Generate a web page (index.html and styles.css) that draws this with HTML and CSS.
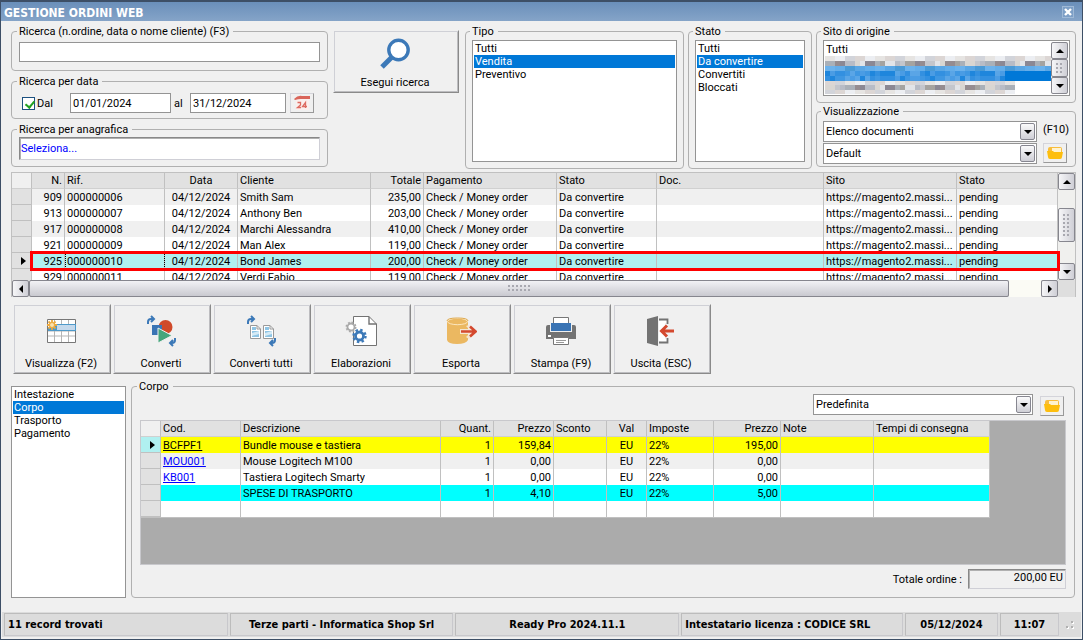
FILE: index.html
```html
<!DOCTYPE html>
<html lang="it">
<head>
<meta charset="utf-8">
<title>Gestione ordini web</title>
<link rel="stylesheet" href="styles.css">
</head>
<body>
<div class="window">
  <header class="titlebar">
    <h1 class="title">GESTIONE ORDINI WEB</h1>
    <button class="close" aria-label="Chiudi"><svg width="8" height="8" viewBox="0 0 8 8"><path d="M1 1L7 7M7 1L1 7" stroke="#fff" stroke-width="2.4"/></svg></button>
  </header>

  <main class="content">
    <section class="filters">
      <div class="stack">
        <fieldset class="group">
          <legend>Ricerca (n.ordine, data o nome cliente) (F3)</legend>
          <input class="field" type="text" aria-label="Ricerca (n.ordine, data o nome cliente)">
        </fieldset>
        <fieldset class="group">
          <legend>Ricerca per data</legend>
          <div class="dates">
            <label class="check"><input type="checkbox" checked>Dal</label>
            <input class="field date-from" type="text" value="01/01/2024" aria-label="Dal">
            <label for="to">al</label>
            <input class="field date-to" id="to" type="text" value="31/12/2024">
            <button class="mini" aria-label="Calendario"><svg width="16" height="16" viewBox="0 0 16 16"><path d="M1 4Q4 1 7 1H15V15H2V4Z" fill="#fbeeec"/><path d="M0 4Q4 0 8 1H16V4H7Q4 4 1 5Z" fill="#d9655a"/><path d="M3.500 7.500H6.500V10L3.500 12.500H7M11.500 13V7.500L8.500 11.500H13" fill="none" stroke="#dd6a60" stroke-width="1.300"/></svg></button>
          </div>
        </fieldset>
        <fieldset class="group">
          <legend>Ricerca per anagrafica</legend>
          <input class="field sunken" type="text" value="Seleziona..." aria-label="Ricerca per anagrafica">
        </fieldset>
      </div>

      <button class="tool search">
        <svg width="32" height="32" viewBox="0 0 32 32"><path d="M3 29L13 19" stroke="#3c79b8" stroke-width="5"/><circle cx="19.500" cy="12" r="9.700" fill="#fff" stroke="#3c79b8" stroke-width="3.400"/></svg>
        <span>Esegui ricerca</span>
      </button>

      <fieldset class="group tall">
        <legend>Tipo</legend>
        <select class="listbox" size="4" aria-label="Tipo"><option>Tutti</option><option selected>Vendita</option><option>Preventivo</option></select>
      </fieldset>

      <fieldset class="group tall">
        <legend>Stato</legend>
        <select class="listbox" size="4" aria-label="Stato"><option>Tutti</option><option selected>Da convertire</option><option>Convertiti</option><option>Bloccati</option></select>
      </fieldset>

      <div class="stack">
        <fieldset class="group sites">
          <legend>Sito di origine</legend>
          <div class="sitebox">
            <div class="sitelist"><div class="siteitem">Tutti</div><svg id="mosaic" width="226" height="39" viewBox="0 0 226 39" shape-rendering="crispEdges" aria-hidden="true"></svg></div>
            <div class="vbar">
              <button class="sb" aria-label="Su"><i class="up"></i></button>
              <div class="thumb"><i class="dots"></i></div>
              <button class="sb" aria-label="Giù"><i class="down"></i></button>
            </div>
          </div>
        </fieldset>
        <fieldset class="group views">
          <legend>Visualizzazione</legend>
          <div class="viewgrid">
            <div class="combo"><select id="view"><option>Elenco documenti</option></select><span class="drop"><i class="down"></i></span></div>
            <label for="view">(F10)</label>
            <div class="combo"><select aria-label="Layout"><option>Default</option></select><span class="drop"><i class="down"></i></span></div>
            <button class="mini" aria-label="Apri layout"><svg width="16" height="16" viewBox="0 0 16 16"><path d="M1 4Q1 2 3 2H13Q15 2 15 4V8H1Z" fill="#f8bd3c"/><path d="M5 3H14V7H5Z" fill="#fff3cf"/><path d="M0 6H6L7 7H16L15 12Q15 14 13 14H3Q1 14 1 12Z" fill="#fdbe0e"/></svg></button>
          </div>
        </fieldset>
      </div>
    </section>

    <section class="orders">
      <div class="orders-view">
        <table class="grid">
          <colgroup><col class="w20"><col class="w33"><col class="w100"><col class="w73"><col class="w133"><col class="w53"><col class="w133"><col class="w100"><col><col class="w133"><col class="w101"></colgroup>
          <thead><tr><th class="corner"></th><th class="r">N.</th><th>Rif.</th><th class="c">Data</th><th>Cliente</th><th class="r">Totale</th><th>Pagamento</th><th>Stato</th><th>Doc.</th><th>Sito</th><th>Stato</th></tr></thead>
          <tbody>
            <tr class="alt"><th></th><td class="r">909</td><td>000000006</td><td class="c">04/12/2024</td><td>Smith Sam</td><td class="r">235,00</td><td>Check / Money order</td><td>Da convertire</td><td></td><td>https://magento2.massi...</td><td>pending</td></tr>
            <tr><th></th><td class="r">913</td><td>000000007</td><td class="c">04/12/2024</td><td>Anthony Ben</td><td class="r">203,00</td><td>Check / Money order</td><td>Da convertire</td><td></td><td>https://magento2.massi...</td><td>pending</td></tr>
            <tr class="alt"><th></th><td class="r">917</td><td>000000008</td><td class="c">04/12/2024</td><td>Marchi Alessandra</td><td class="r">410,00</td><td>Check / Money order</td><td>Da convertire</td><td></td><td>https://magento2.massi...</td><td>pending</td></tr>
            <tr><th></th><td class="r">921</td><td>000000009</td><td class="c">04/12/2024</td><td>Man Alex</td><td class="r">119,00</td><td>Check / Money order</td><td>Da convertire</td><td></td><td>https://magento2.massi...</td><td>pending</td></tr>
            <tr class="current"><th><i class="marker"></i></th><td class="r">925</td><td class="focus">000000010</td><td class="c">04/12/2024</td><td>Bond James</td><td class="r">200,00</td><td>Check / Money order</td><td>Da convertire</td><td></td><td>https://magento2.massi...</td><td>pending</td></tr>
            <tr><th></th><td class="r">929</td><td>000000011</td><td class="c">04/12/2024</td><td>Verdi Fabio</td><td class="r">119,00</td><td>Check / Money order</td><td>Da convertire</td><td></td><td>https://magento2.massi...</td><td>pending</td></tr>
          </tbody>
        </table>
      </div>
      <div class="vbar">
        <button class="sb" aria-label="Su"><i class="up"></i></button>
        <div class="track"><div class="thumb"><i class="dots"></i></div></div>
        <button class="sb" aria-label="Giù"><i class="down"></i></button>
      </div>
      <div class="hbar">
        <button class="sb" aria-label="Sinistra"><i class="left"></i></button>
        <div class="hthumb"><i class="dots wide"></i></div>
        <div class="htrack"></div>
        <button class="sb" aria-label="Destra"><i class="right"></i></button>
      </div>
      <div class="highlight"></div>
    </section>

    <nav class="toolbar">
      <button class="tool">
        <svg width="32" height="32" viewBox="0 0 32 32"><path d="M2 4H31V27H2Z" fill="#fff"/><path d="M9.500 4V27M16.500 4V27M23.500 4V27M2 21H31M2 16H31M2 10H31" stroke="#b5b5b5"/><path d="M2.500 4.500H30.500V27.500H2.500Z" fill="none" stroke="#777"/><path d="M9 9H31V16H3V13Z" fill="#4f9aca"/><path d="M12 10H30V15H12Z" fill="#c5d9ec"/><g stroke="#eda93c" stroke-width="1.800"><path d="M7 5V15M2 10H12M3.500 6.500L10.500 13.500M10.500 6.500L3.500 13.500"/></g><circle cx="7" cy="10" r="2.500" fill="#fbe2ae" stroke="#eda93c"/></svg>
        <span>Visualizza (F2)</span>
      </button>
      <button class="tool">
        <svg width="32" height="32" viewBox="0 0 32 32"><circle cx="20.500" cy="12" r="7" fill="#d04a2a"/><path d="M7 10H17V20H7Z" fill="#3a74b4"/><path d="M13 13L27 20.500L13 28Z" fill="#45a67c" stroke="#f0f0f0"/><g fill="none" stroke="#3c79b8" stroke-width="2"><path d="M3 9V7Q3 4 6 4H8M6 1L9 4L6 7M30 23V25Q30 28 27 28H25M28 25L25 28L28 31"/></g></svg>
        <span>Converti</span>
      </button>
      <button class="tool">
        <svg width="32" height="32" viewBox="0 0 32 32"><g fill="#fff" stroke="#999"><path d="M5.500 10.500H12L15.500 14V23.500H5.500ZM18.500 10.500H25L28.500 14V23.500H18.500Z"/><path d="M12 10.500V14H15.500M25 10.500V14H28.500" fill="none"/></g><g fill="#8ec4e4"><path d="M7 12H11V15H7ZM7 16H14V22H7ZM20 12H24V15H20ZM20 16H27V22H20Z"/></g><path d="M7 18L14 16V19L7 21ZM20 18L27 16V19L20 21Z" fill="#d5eaf5"/><g fill="none" stroke="#3c79b8" stroke-width="2"><path d="M3 9V7Q3 4 6 4H8M6 1L9 4L6 7M30 23V25Q30 28 27 28H25M28 25L25 28L28 31"/></g></svg>
        <span>Converti tutti</span>
      </button>
      <button class="tool">
        <svg width="32" height="32" viewBox="0 0 32 32"><path d="M8.500 1.500H24L31.500 9V30.500H8.500Z" fill="#fff" stroke="#737373"/><path d="M24 1.500V9H31.500" fill="none" stroke="#737373" stroke-width="1.400"/><circle cx="6" cy="12" r="3.500" fill="#fff" stroke="#aaa" stroke-width="1.800"/><circle cx="6" cy="12" r="4.700" fill="none" stroke="#aaa" stroke-width="1.600" stroke-dasharray="1.900 1.790"/><circle cx="14.500" cy="21" r="4" fill="#fff" stroke="#3c79b8" stroke-width="2.800"/><circle cx="14.500" cy="21" r="6" fill="none" stroke="#3c79b8" stroke-width="2.400" stroke-dasharray="2.400 2.310"/></svg>
        <span>Elaborazioni</span>
      </button>
      <button class="tool">
        <svg width="32" height="32" viewBox="0 0 32 32"><path d="M2 6V25Q3 29 12 29Q21 29 23 25V6Z" fill="#ebb861"/><ellipse cx="12.500" cy="6.500" rx="10" ry="3.200" fill="#ebb861" stroke="#fff1d5" stroke-width=".8"/><path d="M2 6Q2 3 12.500 3Q23 3 23 6" fill="none" stroke="#dfa94c"/><path d="M15 14H24L21 11L24 10L32 17L24 24L21 22L24 19H15Z" fill="#f4e6d4"/><path d="M16 16.500H30M25 11.500L30.500 16.500L25 21.500" fill="none" stroke="#d4492f" stroke-width="2.600"/></svg>
        <span>Esporta</span>
      </button>
      <button class="tool">
        <svg width="32" height="32" viewBox="0 0 32 32"><path d="M1 12Q1 10 3 10H5V17H27V10H29Q31 10 31 12V24H1Z" fill="#737373"/><path d="M8.500 2.500H23.500V10H8.500Z" fill="#fff" stroke="#777"/><path d="M6 8H26V16H6Z" fill="#3a74b4"/><path d="M8.500 22.500H23.500V29.500H8.500Z" fill="#fff" stroke="#777"/><path d="M11 25.500H21M11 27.500H19" stroke="#999"/><path d="M3 20H6V22H3Z" fill="#fff"/></svg>
        <span>Stampa (F9)</span>
      </button>
      <button class="tool">
        <svg width="32" height="32" viewBox="0 0 32 32"><path d="M2 4L13 1V31L2 28Z" fill="#737373"/><path d="M14 4.500H22.500V9M22.500 23V27.500H14" fill="#fff" stroke="#737373" stroke-width="1.800"/><path d="M14 6H20V26H14Z" fill="#fff"/><path d="M17 16H29M22 10.500L16.500 16L22 21.500" fill="none" stroke="#d4492f" stroke-width="3"/></svg>
        <span>Uscita (ESC)</span>
      </button>
    </nav>

    <section class="detail">
      <select class="listbox sections" size="4" aria-label="Sezioni"><option>Intestazione</option><option selected>Corpo</option><option>Trasporto</option><option>Pagamento</option></select>
      <fieldset class="group body">
        <legend>Corpo</legend>
        <div class="body-inner">
          <div class="layoutbar">
            <div class="combo preset"><select aria-label="Layout corpo"><option>Predefinita</option></select><span class="drop"><i class="down"></i></span></div>
            <button class="mini" aria-label="Apri layout corpo"><svg width="16" height="16" viewBox="0 0 16 16"><path d="M1 4Q1 2 3 2H13Q15 2 15 4V8H1Z" fill="#f8bd3c"/><path d="M5 3H14V7H5Z" fill="#fff3cf"/><path d="M0 6H6L7 7H16L15 12Q15 14 13 14H3Q1 14 1 12Z" fill="#fdbe0e"/></svg></button>
          </div>
          <div class="lines">
            <table class="grid items">
              <colgroup><col class="w20"><col class="w80"><col class="w200"><col class="w53"><col class="w60"><col class="w53"><col class="w40"><col class="w67"><col class="w67"><col class="w93"><col class="w116"></colgroup>
              <thead><tr><th class="corner"></th><th>Cod.</th><th>Descrizione</th><th class="r">Quant.</th><th class="r">Prezzo</th><th>Sconto</th><th class="c">Val</th><th>Imposte</th><th class="r">Prezzo</th><th>Note</th><th>Tempi di consegna</th></tr></thead>
              <tbody>
                <tr class="bundle"><th><i class="marker"></i></th><td><a href="#">BCFPF1</a></td><td>Bundle mouse e tastiera</td><td class="r">1</td><td class="r">159,84</td><td></td><td class="c">EU</td><td>22%</td><td class="r">195,00</td><td></td><td></td></tr>
                <tr class="alt"><th></th><td><a href="#">MOU001</a></td><td>Mouse Logitech M100</td><td class="r">1</td><td class="r">0,00</td><td></td><td class="c">EU</td><td>22%</td><td class="r">0,00</td><td></td><td></td></tr>
                <tr><th></th><td><a href="#">KB001</a></td><td>Tastiera Logitech Smarty</td><td class="r">1</td><td class="r">0,00</td><td></td><td class="c">EU</td><td>22%</td><td class="r">0,00</td><td></td><td></td></tr>
                <tr class="shipping"><th></th><td></td><td>SPESE DI TRASPORTO</td><td class="r">1</td><td class="r">4,10</td><td></td><td class="c">EU</td><td>22%</td><td class="r">5,00</td><td></td><td></td></tr>
                <tr><th></th><td></td><td></td><td></td><td></td><td></td><td></td><td></td><td></td><td></td><td></td></tr>
              </tbody>
            </table>
          </div>
          <div class="total"><label for="total">Totale ordine :</label><output class="total-value" id="total">200,00 EU</output></div>
        </div>
      </fieldset>
    </section>
  </main>

  <footer class="status">
    <div class="cell">11 record trovati</div>
    <div class="cell mid">Terze parti - Informatica Shop Srl</div>
    <div class="cell mid">Ready Pro 2024.11.1</div>
    <div class="cell">Intestatario licenza : CODICE SRL</div>
    <div class="cell mid">05/12/2024</div>
    <div class="cell mid">11:07</div>
    <div class="grip"><svg width="8" height="8" viewBox="0 0 8 8"><path d="M5 0h2v2H5zM5 5h2v2H5zM0 5h2v2H0z" fill="#b0b0b0"/><path d="M7 1h1v2H6V2h1zM7 6h1v2H6V7h1zM2 6h1v2H1V7h1z" fill="#fff"/></svg></div>
  </footer>
</div>
<script src="mosaic.js"></script>
</body>
</html>
```

FILE: styles.css
```css
* { box-sizing: border-box; }

body {
  margin: 0;
  background: #f0f0f0;
  color: #000;
  font: 11px/13px Roboto, "DejaVu Sans Condensed", sans-serif;
}

button, input, select { font: inherit; color: inherit; margin: 0; }
button { padding: 0; }
svg, i { display: block; }

.window {
  display: flex;
  flex-direction: column;
  min-height: 100vh;
  padding: 1px;
  border: 1px solid #3d4f66;
  border-top-width: 2px;
  background: #f0f0f0;
}

/* Title bar */
.titlebar {
  display: flex;
  align-items: center;
  justify-content: space-between;
  height: 19px;
  margin: -1px -1px 0;
  padding: 3px 8px 0 3px;
  background: linear-gradient(#6a8fba, #85a4c8);
}
.title {
  margin: 0;
  color: #fff;
  font: bold 12px/13px "DejaVu Sans Condensed", sans-serif;
}
.close {
  display: grid;
  place-items: center;
  width: 12px;
  height: 12px;
  margin-bottom: 3px;
  border: 1px solid #9fb9d6;
  background: #7d9fc6;
}

.content {
  flex: 1;
  display: flex;
  flex-direction: column;
  padding: 4px 5px 0 9px;
}

/* Group boxes */
.group {
  min-width: 0;
  margin: 0;
  padding: 0 6px;
  border: 1px solid #b0b0b0;
  border-radius: 4px;
}
.group legend { margin-left: -2px; padding: 0 4px 0 2px; }

.filters {
  display: grid;
  grid-template-columns: 317px 129px 1fr 124px 260px;
  gap: 4px;
}
.stack { display: flex; flex-direction: column; gap: 4px; }
.stack > .group { height: 44px; padding: 0 7px; }
.stack > .group:first-child { height: 46px; }

.field {
  display: block;
  width: 100%;
  height: 20px;
  padding: 0 2px;
  border: 1px solid #949494;
  background: #fff;
}
.stack > .group:first-child .field { margin-top: 4px; }
.stack .sunken {
  height: 23px;
  margin-top: 1px;
  padding: 0 1px;
  color: #00f;
  border: 1px solid #cfcfd6;
  border-top-color: #888;
  border-left-color: #888;
  box-shadow: inset 1px 1px #b0b0b0;
}

.dates { display: flex; align-items: center; padding: 5px 6px 0 3px; }
.check { display: flex; align-items: center; gap: 2px; width: 48px; }
.check input {
  appearance: none;
  width: 13px;
  height: 13px;
  border: 1px solid #1c5180;
  background: #fff;
}
.check input::after {
  content: "";
  display: block;
  width: 4px;
  height: 7px;
  margin: 1px 0 0 4px;
  border: solid #21a121;
  border-width: 0 2px 2px 0;
  transform: rotate(40deg);
}
.date-from { width: 101px; margin-right: 3px; }
.date-to { width: 96px; margin: 0 4px 0 auto; }

.mini {
  display: grid;
  place-items: center;
  width: 24px;
  height: 20px;
  border: 1px solid #d4d4da;
  border-right-color: #999;
  border-bottom-color: #999;
  background: #f0f0f0;
}

/* Large icon buttons */
.tool {
  display: flex;
  flex-direction: column;
  align-items: center;
  justify-content: space-between;
  width: 98px;
  height: 70px;
  padding: 10px 2px 3px 0;
  border: 1px solid #f0f0f0;
  border-right-color: #8a8a8a;
  border-bottom-color: #8a8a8a;
  background: #f0f0f0;
  box-shadow: inset 1px 1px #cfd0d6, inset -1px -1px #bdbdc0;
}
.search { width: 126px; height: 63px; margin: 5px 2px 0 1px; padding-top: 7px; }

/* List boxes */
.tall { height: 144px; }
.listbox {
  display: block;
  width: 100%;
  height: 122px;
  margin-top: 2px;
  padding: 1px;
  overflow: hidden;
  border: 1px solid #949494;
  border-radius: 0;
  background: #fff;
  outline: 0;
}
.listbox option { min-height: 13px; padding: 0 1px; line-height: 13px; }
.listbox option:checked {
  background: linear-gradient(#0078d7, #0078d7);
  -webkit-text-fill-color: #fff;
}

.stack > .sites:first-child { height: 78px; padding: 0 5px 0 6px; }
.stack > .views { height: 62px; margin-top: -2px; padding: 0 6px; }
.sitebox {
  display: flex;
  height: 56px;
  margin-top: 2px;
  padding: 1px;
  border: 1px solid #949494;
  background: #fff;
}
.sitelist { flex: 1; min-width: 0; overflow: hidden; }
.siteitem { padding: 1px 1px 0; }

/* Combos */
.viewgrid {
  display: grid;
  grid-template-columns: 1fr 26px;
  gap: 1px 6px;
  margin-top: 3px;
}
.combo { position: relative; }
.combo select {
  appearance: none;
  display: block;
  width: 100%;
  height: 21px;
  padding: 0 20px 0 2px;
  border: 1px solid #949494;
  border-radius: 0;
  background: #fff;
}
.drop {
  position: absolute;
  top: 2px;
  right: 2px;
  display: grid;
  place-items: center;
  width: 15px;
  height: 17px;
  border: 1px solid #868690;
  border-radius: 2px;
  background: linear-gradient(#fafafb, #cfcfd6);
  pointer-events: none;
}
.viewgrid label { padding-top: 2px; white-space: nowrap; }

/* Glyphs */
.up, .down { border: 4px solid transparent; }
.up { border-top: 0; border-bottom-color: #000; }
.down { border-bottom: 0; border-top-color: #000; }
.left, .right { border: 4px solid transparent; }
.left { border-left: 0; border-right-color: #000; }
.right { border-right: 0; border-left-color: #000; }
.marker {
  width: 5px;
  border: 4px solid transparent;
  border-right: 0;
  border-left: 5px solid #000;
}
.dots {
  width: 7px;
  height: 23px;
  background: radial-gradient(circle at 1px 1px, #a8a8b0 1px, transparent 1px) 0 0 / 4px 4px;
}
.dots.wide { width: 23px; height: 7px; }

/* Scroll bars */
.vbar { display: flex; flex-direction: column; width: 17px; background: #f0f0ee; }
.sb, .thumb, .hthumb {
  display: grid;
  place-items: center;
  border: 1px solid #86868e;
  border-radius: 2px;
  background: linear-gradient(90deg, #f6f6f8, #cfcfd6);
}
.sb { flex: none; width: 17px; height: 17px; }
.sitebox .thumb { flex: 1; }
.sitebox .dots { height: 11px; }
.track { flex: 1; padding-top: 18px; }
.track .thumb { height: 34px; }
.hbar { grid-column: 1 / -1; display: flex; padding-right: 17px; background: #dedede; }
.hthumb { flex: 1; background: linear-gradient(#f2f2f5, #c9c9d0); }
.htrack { width: 32px; background: #fbfbf5; }

/* Data grids */
.orders {
  position: relative;
  display: grid;
  grid-template-columns: 1fr 17px;
  grid-template-rows: 107px 17px;
  margin-top: 3px;
  border: solid #c0c0c0;
  border-width: 1px 1px 0;
}
.orders-view { min-width: 0; overflow: hidden; }
.highlight {
  position: absolute;
  top: 78px;
  left: 18px;
  right: 15px;
  height: 20px;
  border: 3px solid #f00;
}

.grid { width: 100%; table-layout: fixed; border-collapse: separate; border-spacing: 0; background: #fff; }
.grid th, .grid td {
  height: 16px;
  padding: 0 2px;
  border-right: 1px solid #c0c0c0;
  text-align: left;
  font-weight: normal;
  line-height: 15px;
  white-space: nowrap;
}
.grid th { background: #e1e1e1; border-bottom: 1px solid #c0c0c0; }
.grid thead th { padding-top: 1px; border-bottom-color: #d0d0d0; line-height: 14px; }
.grid .corner { background: #f0f0f0; }
.grid .r { text-align: right; }
.grid .c { text-align: center; }
.alt td { background: #f0f0f0; }
.current td { background: #b0f0f0; }
.grid .focus { outline: 1px dotted #000; outline-offset: -1px; }
.bundle td { background: #ff0; }
.grid .bundle th { background: #b0f0f0; }
.shipping td { background: #0ff; }
.grid .marker { margin-left: 7px; }
.grid a { color: #00f; }
.grid .bundle a { color: #000; }
.w20 { width: 20px; }
.w33 { width: 33px; }
.w40 { width: 40px; }
.w53 { width: 53px; }
.w60 { width: 60px; }
.w67 { width: 67px; }
.w73 { width: 73px; }
.w80 { width: 80px; }
.w93 { width: 93px; }
.w100 { width: 100px; }
.w101 { width: 101px; }
.w116 { width: 116px; }
.w133 { width: 133px; }
.w200 { width: 200px; }

.toolbar { display: flex; gap: 2px; padding: 7px 2px 6px; }

/* Order detail */
.detail { flex: 1; display: flex; gap: 5px; padding-bottom: 14px; }
.sections { width: 115px; height: auto; margin-top: 6px; flex: none; }
.body { flex: 1; margin-right: 1px; padding: 0 8px; }
.body legend { margin-left: -3px; }
.body-inner { display: flex; flex-direction: column; height: 100%; }
.layoutbar { display: flex; justify-content: flex-end; align-items: flex-end; gap: 7px; margin: 1px 2px 4px; }
.preset { width: 220px; }
.preset select { margin-bottom: 1px; }
.lines { flex: 1; min-height: 140px; border: 1px solid #c8c8cc; background: #ababab; }
.items { width: 849px; border-bottom: 1px solid #c0c0c0; }
.total { display: flex; justify-content: flex-end; align-items: center; gap: 6px; padding: 4px 0 8px; }
.total-value {
  width: 98px;
  height: 20px;
  padding: 0 2px;
  border: 1px solid #cfcfd6;
  border-top-color: #888;
  border-left-color: #888;
  box-shadow: inset 1px 1px #b0b0b0;
  text-align: right;
  line-height: 16px;
}

/* Status bar */
.status {
  display: grid;
  grid-template-columns: 225fr 225fr 225fr 223fr 93px 59px 18px;
  gap: 2px;
  margin-bottom: 1px;
  padding: 1px 2px;
  background: #dcdcdc;
  font: bold 11px/13px "DejaVu Sans Condensed", sans-serif;
}
.cell {
  height: 23px;
  padding: 4px 3px;
  overflow: hidden;
  border: 1px solid #c8c8cc;
  border-top-color: #bcbcbc;
  border-left-color: #bcbcbc;
  white-space: nowrap;
}
.mid { text-align: center; }
.grip { display: grid; place-items: center; }
```

FILE: mosaic.js
```javascript
// Draws the obscured site addresses as coloured cells.
const svg = document.getElementById("mosaic");
const greys = ["#c4c6cc", "#8b8894", "#d9d6d2", "#a5a3a0", "#b8bcc6", "#958c90", "#e2e4e8", "#aab0b8"];
const pale = ["#e6e4e2", "#d2d4da", "#eceef2", "#dcd6d4"];
const blues = ["#3f97e2", "#1f86dc", "#5aa5e6", "#3390e0", "#4a9ce4"];
const sky = ["#64ade9", "#5aa6e4", "#6cb2ec", "#4a9ad6"];
const rows = [
  [0, 5, 46, pale], [5, 5, 46, greys], [10, 5, 46, sky], [15, 5, 36, blues],
  [20, 5, 36, blues], [25, 4, 38, pale], [29, 5, 38, greys], [34, 4, 38, pale]
];
const draw = (x, y, w, h, fill) => {
  const r = document.createElementNS("http://www.w3.org/2000/svg", "rect");
  Object.entries({ x, y, width: w, height: h, fill }).forEach(([k, v]) => r.setAttribute(k, v));
  svg.append(r);
};
draw(0, 12, 226, 13, "#0078d7");
rows.forEach(([y, h, count, set], n) => {
  for (let i = 0; i < count; i++) {
    draw(i * 5, y, 5, h, set[(i * i * 3 + i * 5 + n * 7 + (i >> 2)) % set.length]);
  }
});
```
